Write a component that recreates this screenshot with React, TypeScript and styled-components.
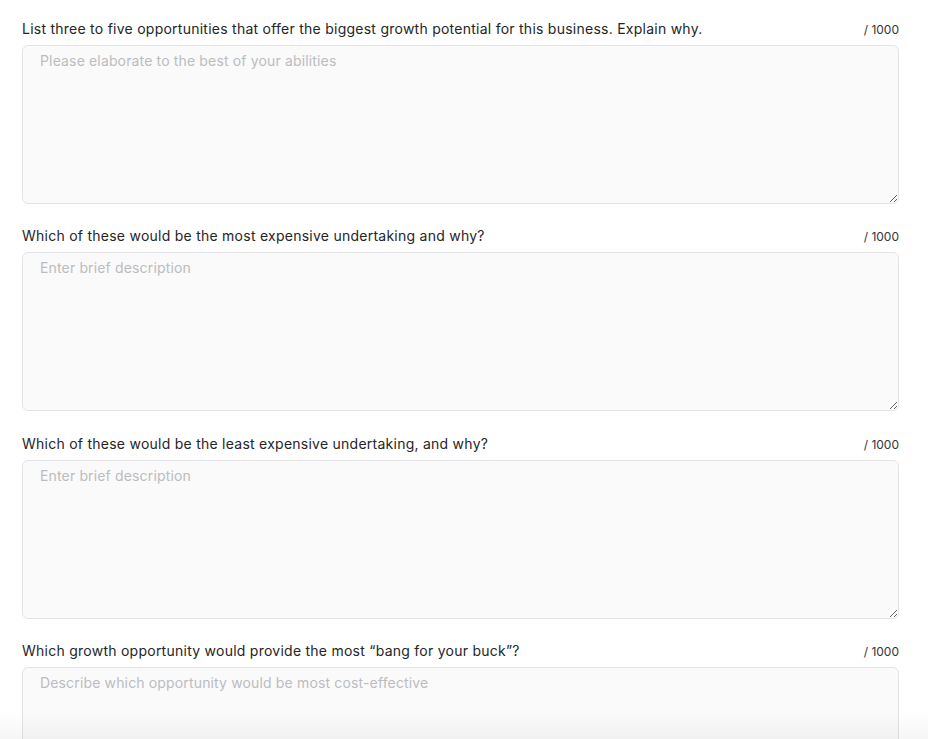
import React from 'react';
import styled, { createGlobalStyle } from 'styled-components';

const questions = [
  {
    label:
      'List three to five opportunities that offer the biggest growth potential for this business. Explain why.',
    placeholder: 'Please elaborate to the best of your abilities',
  },
  {
    label: 'Which of these would be the most expensive undertaking and why?',
    placeholder: 'Enter brief description',
  },
  {
    label: 'Which of these would be the least expensive undertaking, and why?',
    placeholder: 'Enter brief description',
  },
  {
    label: 'Which growth opportunity would provide the most \u201cbang for your buck\u201d?',
    placeholder: 'Describe which opportunity would be most cost-effective',
  },
];

const App: React.FC = () => {
  return (
    <>
      <GlobalStyle />
      <Page>
        {questions.map((q, i) => (
          <Field key={i}>
            <LabelRow>
              <Label>{q.label}</Label>
              <Counter>/ 1000</Counter>
            </LabelRow>
            <TextArea placeholder={q.placeholder} maxLength={1000} />
          </Field>
        ))}
      </Page>
      <BottomShade />
    </>
  );
};

const GlobalStyle = createGlobalStyle`
  body {
    margin: 0;
    background: #ffffff;
    font-family: Inter, "Noto Sans", sans-serif;
    overflow: hidden;
  }
`;

const Page = styled.div`
  display: flex;
  flex-direction: column;
  gap: 23.3px;
  padding: 20px 29px 0 22px;
`;

const Field = styled.div`
  display: flex;
  flex-direction: column;
  gap: 8px;
`;

const LabelRow = styled.div`
  display: flex;
  justify-content: space-between;
  align-items: baseline;
`;

const Label = styled.span`
  font-size: 14px;
  line-height: 17px;
  color: #252525;
  letter-spacing: 0.25px;
`;

const Counter = styled.span`
  font-size: 12px;
  color: #333;
`;

const TextArea = styled.textarea`
  box-sizing: border-box;
  width: 100%;
  height: 159px;
  padding: 6px 17px;
  border: 1px solid #e4e4e7;
  border-radius: 6px;
  background: #fafafa;
  font-family: Inter, "Noto Sans", sans-serif;
  font-size: 14px;
  letter-spacing: 0.15px;
  color: #252525;
  outline: none;
  resize: vertical;

  &::placeholder {
    color: #bcbcc0;
  }
`;

const BottomShade = styled.div`
  position: fixed;
  left: 0;
  right: 0;
  bottom: 0;
  height: 28px;
  pointer-events: none;
  background: linear-gradient(to bottom, rgba(0, 0, 0, 0), rgba(0, 0, 0, 0.035));
`;

export default App;
